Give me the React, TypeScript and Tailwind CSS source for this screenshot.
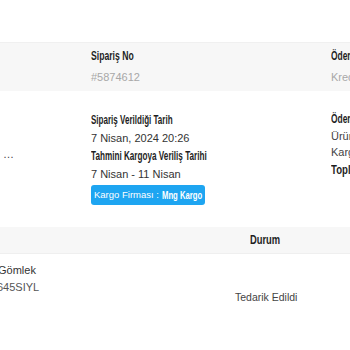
import React from "react";

const R = "font-['Liberation_Sans',Arial,sans-serif] text-[11px]";

function C({
  children,
  className = "",
  scale = "scale-x-[0.7]",
}: {
  children: React.ReactNode;
  className?: string;
  scale?: string;
}) {
  return (
    <span
      className={`inline-block origin-left whitespace-nowrap text-[12px] font-bold text-[#1e1e1e] ${scale} ${className}`}
    >
      {children}
    </span>
  );
}

export default function App() {
  return (
    <div className={`w-[350px] h-[350px] overflow-hidden bg-white ${R}`}>
      <div className="h-[43px] border-b border-[#f0f0f0]" />
      {/* top band */}
      <div className="flex h-[48px] bg-[#f7f7f7]">
        <div className="w-[91px] shrink-0" />
        <div className="w-[240px] shrink-0 pt-[5px]">
          <div className="leading-[16px]">
            <C scale="scale-x-[0.72]">Sipariş No</C>
          </div>
          <div className="mt-[5px] leading-[16px] text-[#a8a8a8]">#5874612</div>
        </div>
        <div className="w-[200px] shrink-0 pt-[5px]">
          <div className="leading-[16px]">
            <C>Ödeme Yöntemi</C>
          </div>
          <div className="mt-[5px] leading-[16px] text-[#a8a8a8] whitespace-nowrap">Kredi Kartı</div>
        </div>
      </div>
      {/* middle */}
      <div className="flex h-[136px]">
        <div className="w-[91px] shrink-0 overflow-hidden pt-[54px]">
          <div className="leading-[18px] text-[#444] -ml-[3px] whitespace-nowrap">: …</div>
        </div>
        <div className="w-[240px] shrink-0 pt-[20px]">
          <div className="leading-[18px]">
            <C scale="scale-x-[0.67]">Sipariş Verildiği Tarih</C>
          </div>
          <div className="leading-[18px] text-[#333]">7 Nisan, 2024 20:26</div>
          <div className="leading-[18px]">
            <C scale="scale-x-[0.68]">Tahmini Kargoya Veriliş Tarihi</C>
          </div>
          <div className="leading-[18px] text-[#333]">7 Nisan - 11 Nisan</div>
          <div className="mt-[2px] inline-flex h-[20px] items-center rounded-[3px] bg-[#1ea5f1] pl-[3px] pr-[3px] text-[9.5px] text-white whitespace-nowrap">
            <span>Kargo Firması :&nbsp;</span>
            <span className="inline-block origin-left scale-x-[0.7] text-[11px] font-bold -mr-[17px]">
              Mng Kargo
            </span>
          </div>
        </div>
        <div className="w-[200px] shrink-0 pt-[19px] whitespace-nowrap">
          <div className="leading-[18px]">
            <C>Ödeme Bilgileri</C>
          </div>
          <div className="leading-[16px] text-[#444]">Ürün Toplamı</div>
          <div className="leading-[16px] text-[#444]">Kargo Ücreti</div>
          <div className="leading-[20px]">
            <C scale="scale-x-[0.8]">Toplam</C>
          </div>
        </div>
      </div>
      {/* bottom table header */}
      <div className="flex h-[27px] items-center bg-[#f7f7f7] border-b border-[#efefef]">
        <div className="w-[220px] shrink-0" />
        <div className="w-[90px] shrink-0 pl-[30px]">
          <C scale="scale-x-[0.78]">Durum</C>
        </div>
      </div>
      {/* row */}
      <div className="flex">
        <div className="w-[220px] shrink-0 pt-[8px] overflow-hidden">
          <div className="leading-[17px] text-[#333] -ml-[2px] whitespace-nowrap">Gömlek</div>
          <div className="leading-[17px] text-[#555] -ml-[3px] whitespace-nowrap">645SIYL</div>
        </div>
        <div className="w-[90px] shrink-0 pt-[34px] pl-[15px]">
          <div className="leading-[18px] text-[10.5px] text-[#444] whitespace-nowrap">Tedarik Edildi</div>
        </div>
      </div>
    </div>
  );
}
